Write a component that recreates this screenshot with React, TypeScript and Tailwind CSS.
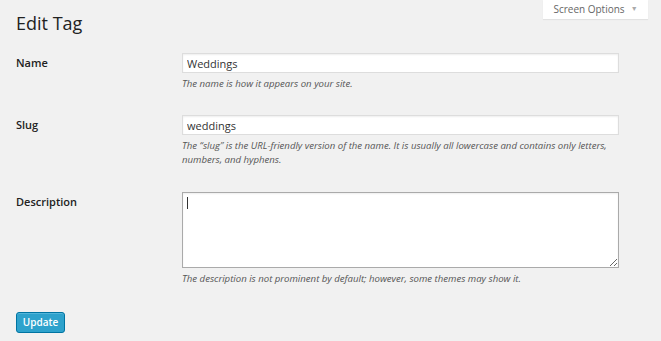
export default function App() {
  return (
    <div className="relative min-h-[341px] bg-[#f1f1f1] font-['Open_Sans',sans-serif] text-[#222]">
      <div className="absolute right-[13px] top-0 flex h-[19px] w-[105px] items-center justify-center gap-[6px] bg-white text-[10px] text-[#666] shadow-[0_1px_1px_rgba(0,0,0,0.06)]">
        <span>Screen Options</span>
        <span className="text-[7px] text-[#aaa]">▼</span>
      </div>

      <div className="pl-[16px] pt-[10px]">
        <h1 className="text-[18px] font-normal leading-[26px] text-[#222]">Edit Tag</h1>

        <div className="mt-[17px] grid grid-cols-[166px_437px]">
          <label className="text-[11px] font-semibold leading-[20px]">Name</label>
          <div>
            <input
              defaultValue="Weddings"
              className="block h-[20px] w-full border border-[#ddd] bg-white px-[4px] text-[11px] text-[#333] shadow-[inset_0_1px_2px_rgba(0,0,0,0.07)] outline-none"
            />
            <p className="mt-[4px] text-[9.6px] italic leading-[14px] text-[#555]">The name is how it appears on your site.</p>
          </div>
        </div>

        <div className="mt-[24px] grid grid-cols-[166px_437px]">
          <label className="text-[11px] font-semibold leading-[20px]">Slug</label>
          <div>
            <input
              defaultValue="weddings"
              className="block h-[20px] w-full border border-[#ddd] bg-white px-[4px] text-[11px] text-[#333] shadow-[inset_0_1px_2px_rgba(0,0,0,0.07)] outline-none"
            />
            <p className="mt-[4px] text-[9.6px] italic leading-[14px] text-[#555]">
              The “slug” is the URL-friendly version of the name. It is usually all lowercase and contains only letters, numbers, and hyphens.
            </p>
          </div>
        </div>

        <div className="mt-[25px] grid grid-cols-[166px_437px]">
          <label className="text-[11px] font-semibold leading-[20px]">Description</label>
          <div>
            <div className="relative">
              <textarea className="block h-[76px] w-full resize-y border border-[#aaa] bg-white px-[4px] py-[2px] text-[11px] shadow-[inset_0_1px_2px_rgba(0,0,0,0.07)] outline-none" />
              <span className="absolute left-[5px] top-[5px] h-[12px] w-px bg-[#333]" />
            </div>
            <p className="mt-[4px] text-[9.6px] italic leading-[14px] text-[#555]">
              The description is not prominent by default; however, some themes may show it.
            </p>
          </div>
        </div>

        <button className="mt-[26px] h-[21px] w-[49px] rounded-[3px] border border-[#0074a2] bg-[#2ea2cc] text-[10px] font-semibold text-white shadow-[inset_0_1px_0_rgba(120,200,230,0.5)]">
          Update
        </button>
      </div>
    </div>
  );
}
